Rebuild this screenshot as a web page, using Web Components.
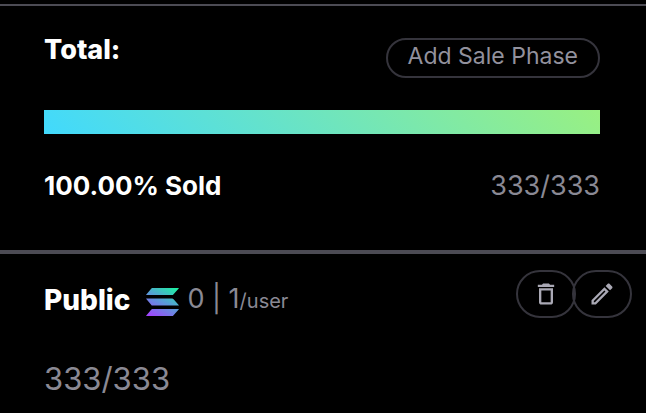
<!DOCTYPE html>
<html lang="en">
<head>
<meta charset="utf-8">
<title>Sale phases</title>
<style>
body { margin: 0; background: #000; color: #8a8994; font-family: Inter, "Liberation Sans", sans-serif; }
</style>
</head>
<body>
<sale-page></sale-page>
<script>
const define = (name, html) => customElements.define(name, class extends HTMLElement {
  constructor() {
    super();
    const t = document.createElement('template');
    t.innerHTML = html;
    this.attachShadow({ mode: 'open' }).append(t.content.cloneNode(true));
  }
});

define('pill-button', `
<style>
:host { display: block; }
button { box-sizing: border-box; display: block; height: 40px; padding: 0 20px 4px; border: 2px solid #35343c;
  border-radius: 20px; background: none; color: #92919d; font: 400 23px/32px Inter, "Liberation Sans", sans-serif; white-space: nowrap; }
</style>
<button type="button"><slot></slot></button>`);

define('trash-button', `
<style>
:host { display: block; }
button { box-sizing: border-box; width: 60px; height: 48px; padding: 0; border: 2px solid #35343c; border-radius: 24px;
  background: none; color: #aaa9b5; display: grid; place-items: center; }
svg { width: 28px; height: 28px; }
</style>
<button type="button" aria-label="Delete phase"><svg viewBox="0 0 24 24" fill="currentColor"><path d="M6 19c0 1.100.9 2 2 2h8c1.100 0 2-.9 2-2V7H6v12zM8 9h8v10H8V9zm7.500-5-1-1h-5l-1 1H5v2h14V4z"/></svg></button>`);

define('edit-button', `
<style>
:host { display: block; }
button { box-sizing: border-box; width: 60px; height: 48px; padding: 0; border: 2px solid #35343c; border-radius: 24px;
  background: none; color: #aaa9b5; display: grid; place-items: center; }
svg { width: 28px; height: 28px; }
</style>
<button type="button" aria-label="Edit phase"><svg viewBox="0 0 24 24" fill="currentColor"><path d="m14.060 9.020.92.92L5.920 19H5v-.92l9.060-9.060M17.660 3c-.25 0-.51.1-.7.29l-1.830 1.830 3.750 3.750 1.830-1.830c.39-.39.39-1.020 0-1.410l-2.340-2.340c-.2-.2-.45-.29-.71-.29zm-3.600 3.190L3 17.250V21h3.750L17.810 9.940l-3.750-3.750z"/></svg></button>`);

define('solana-mark', `
<style>
:host { display: block; }
svg { display: block; width: 33px; height: 28px; }
</style>
<svg viewBox="0 0 32 28" preserveAspectRatio="none" role="img" aria-label="SOL"><defs><linearGradient id="g" gradientUnits="userSpaceOnUse" x1="26" y1="-3" x2="7" y2="30"><stop offset="0" stop-color="#19f5a0"/><stop offset=".5" stop-color="#5a9bd8"/><stop offset="1" stop-color="#a344ff"/></linearGradient></defs>
<path fill="url(#g)" d="M6 0h25.500q.7 0 .2.600L26.500 6.500q-.5.500-1 .500H.5q-.7 0-.2-.6L5.200.5Q5.500 0 6 0zM.5 10.500h25q.5 0 1 .5l5.200 5.900q.5.600-.2.600H6q-.5 0-.8-.5L.3 11.100q-.5-.6.200-.6zM6 21h25.500q.7 0 .2.600L26.500 27.500q-.5.500-1 .500H.5q-.7 0-.2-.6l4.900-5.900Q5.500 21 6 21z"/></svg>`);

define('sale-progress', `
<style>
:host { display: block; height: 24px; background: linear-gradient(45deg, #41d9fd, #99f082); }
</style>`);

define('total-card', `
<style>
:host { display: block; margin-top: 4px; border-top: 2px solid #4c4b54; padding: 32px 46px 48px 44px; }
.row { display: flex; justify-content: space-between; align-items: flex-start; }
.bold { color: #fff; font-weight: 800; font-size: 27px; line-height: 24px; }
.top { height: 40px; margin-bottom: 32px; }
.end { margin-top: 36px; height: 32px; }
.end .bold { font-weight: 700; font-size: 26px; line-height: 32px; }
.count { font-size: 27px; line-height: 32px; }
</style>
<div class="row top"><span class="bold">Total:</span><pill-button>Add Sale Phase</pill-button></div>
<sale-progress></sale-progress>
<div class="row end"><span class="bold">100.00% Sold</span><span class="count">333/333</span></div>`);

define('phase-card', `
<style>
:host { display: block; border-top: 4px solid #4c4b54; padding: 16px 14px 12px 44px; }
.row { display: flex; align-items: flex-start; }
.info { flex: 1; display: flex; align-items: center; padding-top: 13px; line-height: 32px; font-size: 27px; white-space: nowrap; }
.name { color: #fff; font-weight: 800; font-size: 28px; }
solana-mark { margin: 4px 8px 0 16px; }
small { font-size: 20px; }
.actions { display: flex; }
edit-button { margin-left: -4px; }
.count { margin-top: 43px; font-size: 31px; line-height: 36px; }
</style>
<div class="row"><div class="info"><span class="name">Public</span><solana-mark></solana-mark><span>0 | 1<small>/user</small></span></div>
<div class="actions"><trash-button></trash-button><edit-button></edit-button></div></div>
<div class="count">333/333</div>`);

define('sale-page', `
<style>:host { display: flow-root; }</style>
<total-card></total-card><phase-card></phase-card>`);
</script>
</body>
</html>
